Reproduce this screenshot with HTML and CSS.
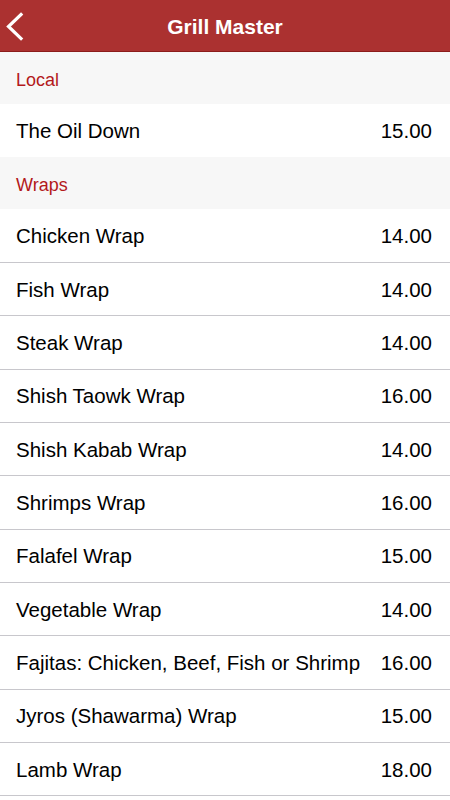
FILE: index.html
```html
<!DOCTYPE html>
<html>

<head>
  <meta charset="UTF-8">
  <link rel="stylesheet" href="styles.css">
</head>

<body>
  <div class="nav-bar">
    <a class="back" href="#">
      <svg width="20" height="30" viewBox="0 0 20 30">
        <polyline points="15,2.5 2.5,14.5 15,26.5" fill="none" stroke="#fff" stroke-width="3.2" stroke-linecap="square" stroke-linejoin="miter" />
      </svg>
    </a>
    <p class="nav-title">Grill Master</p>
  </div>

  <div class="section">Local</div>
  <div class="item first">
    <span class="name">The Oil Down</span>
    <span class="price">15.00</span>
  </div>

  <div class="section">Wraps</div>
  <div class="item first">
    <span class="name">Chicken Wrap</span>
    <span class="price">14.00</span>
  </div>
  <div class="item">
    <span class="name">Fish Wrap</span>
    <span class="price">14.00</span>
  </div>
  <div class="item">
    <span class="name">Steak Wrap</span>
    <span class="price">14.00</span>
  </div>
  <div class="item">
    <span class="name">Shish Taowk Wrap</span>
    <span class="price">16.00</span>
  </div>
  <div class="item">
    <span class="name">Shish Kabab Wrap</span>
    <span class="price">14.00</span>
  </div>
  <div class="item">
    <span class="name">Shrimps Wrap</span>
    <span class="price">16.00</span>
  </div>
  <div class="item">
    <span class="name">Falafel Wrap</span>
    <span class="price">15.00</span>
  </div>
  <div class="item">
    <span class="name">Vegetable Wrap</span>
    <span class="price">14.00</span>
  </div>
  <div class="item">
    <span class="name">Fajitas: Chicken, Beef, Fish or Shrimp</span>
    <span class="price">16.00</span>
  </div>
  <div class="item">
    <span class="name">Jyros (Shawarma) Wrap</span>
    <span class="price">15.00</span>
  </div>
  <div class="item">
    <span class="name">Lamb Wrap</span>
    <span class="price">18.00</span>
  </div>
  <div class="item"></div>
</body>

</html>
```

FILE: styles.css
```css
* {
  box-sizing: border-box;
}

body {
  margin: 0;
  height: 800px;
  overflow: hidden;
  background-color: #f7f7f7;
  font-family: "Liberation Sans", Arial, Helvetica, sans-serif;
  color: #000;
}

.nav-bar {
  display: flex;
  align-items: center;
  justify-content: center;
  position: relative;
  height: 52px;
  padding-top: 2px;
  background-color: #ab3130;
  border-bottom: 1px solid #8c1c1b;
}

.back {
  position: absolute;
  left: 6px;
  top: 12px;
  display: flex;
}

.nav-title {
  margin: 0;
  color: #fff;
  font-size: 21px;
  font-weight: bold;
}

.section {
  display: flex;
  align-items: center;
  height: 52px;
  padding: 4px 16px 0 16px;
  background-color: #f7f7f7;
  color: #b3191b;
  font-size: 18px;
}

.item {
  display: flex;
  align-items: center;
  justify-content: space-between;
  height: 53.33px;
  padding: 1px 18px 0 16px;
  background-color: #fff;
  border-top: 1px solid #c8c7cc;
  font-size: 20.5px;
}

.item.first {
  border-top: none;
  height: 53px;
}
```
